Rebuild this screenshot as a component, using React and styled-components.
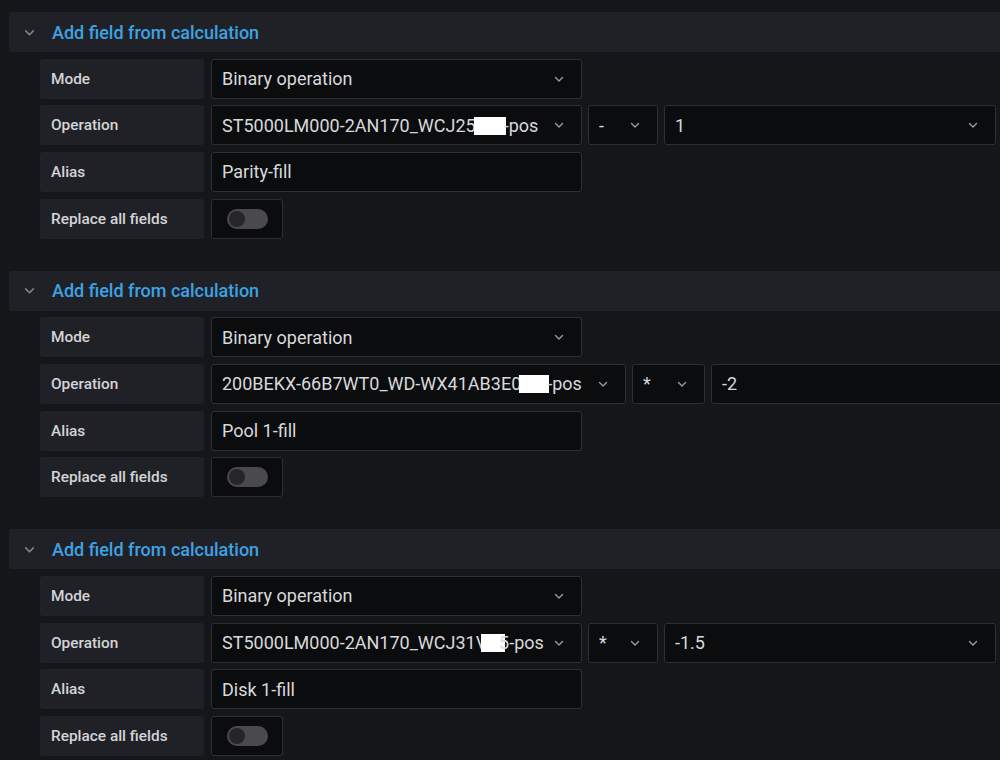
import React from "react";
import styled, { createGlobalStyle } from "styled-components";

const Global = createGlobalStyle`
  html, body { margin: 0; padding: 0; background: #151619; }
  body { font-family: Roboto, "Noto Sans", "Liberation Sans", sans-serif; overflow: hidden; }
  #root { width: 1000px; height: 760px; overflow: hidden; }
`;

const Page = styled.div`
  display: flex;
  flex-direction: column;
  gap: 32px;
  padding: 12px 0 0 9px;
  width: 1000px;
  box-sizing: border-box;
`;

const Section = styled.section`
  display: flex;
  flex-direction: column;
  gap: 6.67px;
`;

const Header = styled.div`
  display: flex;
  align-items: center;
  height: 40px;
  width: 1010px;
  background: #202126;
  border-radius: 3px;
  padding-left: 14px;
  box-sizing: border-box;
  gap: 16px;
`;

const Title = styled.span`
  color: #3ea2e4;
  font-size: 18px;
  font-weight: 500;
  letter-spacing: 0;
`;

const Row = styled.div`
  display: flex;
  align-items: stretch;
  height: 40px;
  padding-left: 31px;
  gap: 6px;
`;

const Label = styled.div`
  width: 164px;
  flex: none;
  display: flex;
  align-items: center;
  padding-left: 11px;
  box-sizing: border-box;
  background: #202126;
  border-radius: 3px;
  color: #d3d4d8;
  font-size: 15.4px;
  font-weight: 500;
  margin-right: 1px;
`;

const Box = styled.div`
  width: ${(p) => p.$w}px;
  flex: none;
  display: flex;
  align-items: center;
  box-sizing: border-box;
  background: #0b0c0e;
  border: 1px solid #2d2f34;
  border-radius: 3px;
  padding: 0 16px 0 10px;
  color: #d8d9dc;
  font-size: 18px;
  white-space: nowrap;
  overflow: hidden;
`;

const Value = styled.span`
  flex: 1;
  overflow: hidden;
`;

const Redact = styled.span`
  display: inline-block;
  width: ${(p) => p.$w}px;
  height: 18px;
  background: #ffffff;
  vertical-align: -3px;
  margin-left: ${(p) => p.$ml || 0}px;
  margin-right: ${(p) => p.$mr || 0}px;
`;

const ToggleBox = styled.div`
  width: 72px;
  flex: none;
  display: flex;
  align-items: center;
  justify-content: center;
  box-sizing: border-box;
  background: #0b0c0e;
  border: 1px solid #2d2f34;
  border-radius: 3px;
`;

const Track = styled.div`
  width: 41px;
  height: 20px;
  border-radius: 10px;
  background: #4a4a4d;
  display: flex;
  align-items: center;
  padding-left: 2px;
  box-sizing: border-box;
`;

const Thumb = styled.div`
  width: 16px;
  height: 16px;
  border-radius: 50%;
  background: #262628;
`;

const Chevron = ({ color = "#9a9ba0", size = 12 }) => (
  <svg width={size} height={size} viewBox="0 0 12 12" fill="none" style={{ flex: "none" }}>
    <path d="M2.5 4.5 L6 8 L9.5 4.5" stroke={color} strokeWidth="1.4" strokeLinecap="round" strokeLinejoin="round" />
  </svg>
);

const Select = ({ w, children }) => (
  <Box $w={w}>
    <Value>{children}</Value>
    <Chevron />
  </Box>
);

const Calc = ({ op, alias }) => (
  <Section>
    <Header>
      <Chevron color="#85868b" size={13} />
      <Title>Add field from calculation</Title>
    </Header>
    <Row>
      <Label>Mode</Label>
      <Select w={371}>Binary operation</Select>
    </Row>
    <Row>
      <Label>Operation</Label>
      <Select w={op.w1}>{op.field}</Select>
      <Select w={op.w2}>{op.operator}</Select>
      <Select w={op.w3}>{op.value}</Select>
    </Row>
    <Row>
      <Label>Alias</Label>
      <Box $w={371}>{alias}</Box>
    </Row>
    <Row>
      <Label>Replace all fields</Label>
      <ToggleBox>
        <Track>
          <Thumb />
        </Track>
      </ToggleBox>
    </Row>
  </Section>
);

export default function App() {
  return (
    <>
      <Global />
      <Page>
        <Calc
          op={{
            w1: 371,
            w2: 70,
            w3: 332,
            field: (
              <>
                ST5000LM000-2AN170_WCJ25<Redact $w={32} $ml={-2} $mr={-2} />-pos
              </>
            ),
            operator: "-",
            value: "1",
          }}
          alias="Parity-fill"
        />
        <Calc
          op={{
            w1: 415,
            w2: 73,
            w3: 340,
            field: (
              <>
                200BEKX-66B7WT0_WD-WX41AB3E0<Redact $w={30} $ml={-2} $mr={-2} />-pos
              </>
            ),
            operator: "*",
            value: "-2",
          }}
          alias="Pool 1-fill"
        />
        <Calc
          op={{
            w1: 371,
            w2: 70,
            w3: 332,
            field: (
              <>
                ST5000LM000-2AN170_WCJ31V<Redact $w={24} $ml={-6} $mr={-6} />5-pos
              </>
            ),
            operator: "*",
            value: "-1.5",
          }}
          alias="Disk 1-fill"
        />
      </Page>
    </>
  );
}
